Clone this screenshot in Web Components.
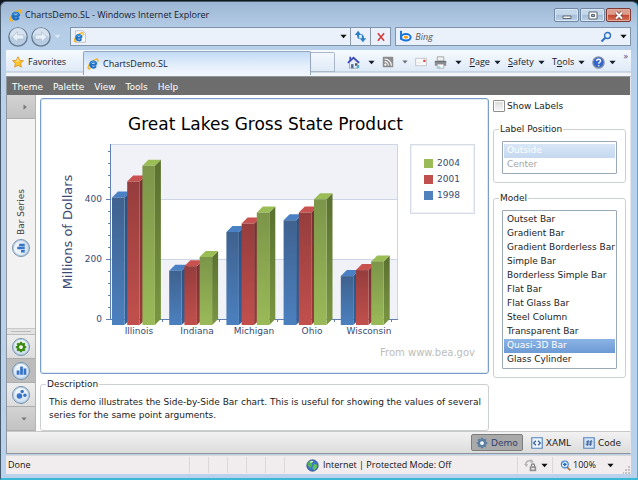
<!DOCTYPE html>
<html lang="en">
<head>
<meta charset="utf-8">
<title>ChartsDemo.SL</title>
<style>
    html, body {
        margin: 0;
        min-height: 100vh;
    }

    body {
        display: flex;
        background: #10181f;
        font-family: "DejaVu Sans", Verdana, sans-serif;
        font-size: 9px;
        line-height: 12px;
        color: #222;
    }
</style>
</head>
<body>
<ie-window>
    <ie-titlebar slot="chrome">ChartsDemo.SL - Windows Internet Explorer</ie-titlebar>
    <ie-address slot="chrome"></ie-address>
    <ie-commands slot="chrome" page-title="ChartsDemo.SL"></ie-commands>

    <demo-menu slot="page"></demo-menu>
    <demo-body slot="page">
        <demo-sidebar slot="side">Bar Series</demo-sidebar>
        <bar-chart slot="main" heading="Great Lakes Gross State Product" axis="Millions of Dollars">From www.bea.gov</bar-chart>
        <group-box slot="main" label="Description" class="description">
            This demo illustrates the Side-by-Side Bar chart. This is useful for showing the values of several series for the same point arguments.
        </group-box>
        <check-option slot="options">Show Labels</check-option>
        <group-box slot="options" label="Label Position">
            <list-box label="Label Position" items="Outside,Center" selected="Outside" disabled></list-box>
        </group-box>
        <group-box slot="options" label="Model">
            <list-box label="Model" selected="Quasi-3D Bar"
                items="Outset Bar,Gradient Bar,Gradient Borderless Bar,Simple Bar,Borderless Simple Bar,Flat Bar,Flat Glass Bar,Steel Column,Transparent Bar,Quasi-3D Bar,Glass Cylinder"></list-box>
        </group-box>
    </demo-body>
    <demo-footer slot="page"></demo-footer>

    <ie-status slot="status">Done</ie-status>
</ie-window>

<script>
const ieLogo = `
    <path d="M14 5.500c1.200-3 .2-4.800-2.400-3.700C7.500 3.200 3 8 1.800 11.500c-1 2.800.6 3.700 3 2.300" fill="none" stroke="#efb32c" stroke-width="2"/>
    <path d="M12.500 9H4.500C4.500 3.500 12 3.500 12.300 8.700M4.600 9c.2 4.500 5.500 4.800 7.300 2" fill="none" stroke="#1d6fc4" stroke-width="2.800"/>
    <path d="M4.800 7C6 4.500 10 4.300 11.500 6.500" fill="none" stroke="#5bb4f2" stroke-width="1.200"/>`;

const icons = {
    ie: ieLogo,
    page: `<path d="M2 1h9l3 3v11H2z" fill="#fff" stroke="#a9b4c0"/><g transform="translate(-1 2) scale(.85)">${ieLogo}</g>`,
    star: `<path d="M8 1l2.200 4.700 5.100.6-3.800 3.500 1 5.100L8 12.400 3.500 14.900l1-5.100L.7 6.300l5.100-.6z" fill="#ffc32e" stroke="#d98a13"/><path d="M8 3l1.500 3.500L5 8z" fill="#ffe899"/>`,
    refresh: `<path d="M5 1L1 6h2.700c0 3 .8 4.500 3.500 5.500-1-2-1-3.500-.8-5.500H9zM11 15l4-5h-2.700c0-3-.8-4.500-3.500-5.500 1 2 1 3.500.8 5.500H7z" fill="#2c7fc8"/>`,
    stop: `<path d="M3 2l10 12M13 2L3 14" fill="none" stroke="#d2393b" stroke-width="2.400"/>`,
    bing: `<path d="M2.500 1v11" stroke="#1874d8" stroke-width="2.400"/><ellipse cx="8.500" cy="9" rx="5.800" ry="4" fill="#fff" stroke="#1874d8" stroke-width="2.500"/><ellipse cx="8.500" cy="9" rx="2.600" ry="1.800" fill="#f59b1c"/>`,
    search: `<circle cx="10" cy="6" r="4" fill="#e6f2fd" stroke="#2e6fc0" stroke-width="1.800"/><path d="M7 9l-5 5" stroke="#2e6fc0" stroke-width="2.600"/>`,
    home: `<path d="M3 8v7h10V8L8 3.500z" fill="#e8eef6" stroke="#7c8aa0" stroke-width=".8"/><path d="M1 8.500L8 2l7 6.500" fill="none" stroke="#3848b8" stroke-width="2"/><path d="M3 1h2v4l-2 2z" fill="#3848b8"/><path d="M5 10h3v5H5z" fill="#4c6a92"/><path d="M10 9h2v3h-2z" fill="#333"/><path d="M12 11h3v4h-3z" fill="#4daccd"/>`,
    rss: `<rect x="1" y="1" width="14" height="14" rx="1" fill="#8c8c8c"/><circle cx="4.500" cy="11.500" r="1.500" fill="#fff"/><path d="M3.500 7.500a5 5 0 015 5M3.500 4a9 9 0 019 9" fill="none" stroke="#fff" stroke-width="1.500"/>`,
    mail: `<rect x="1" y="3" width="14" height="10" fill="#fafafa" stroke="#b5b8bd"/><path d="M11 5h3v3h-3z" fill="#d84a4a"/><path d="M3 9h6" stroke="#d9d9d9"/>`,
    printer: `<path d="M4 1h8v5H4z" fill="#f2f2f2" stroke="#999"/><path d="M1 6h14v6H1z" fill="#8b8f95"/><path d="M1 7h14" stroke="#5f6368"/><path d="M4 10h8v5H4z" fill="#fff" stroke="#888" stroke-width=".7"/><path d="M5 13h3v1H5z" fill="#3aa6cf"/>`,
    help: `<circle cx="8" cy="8" r="7" fill="#3467c9" stroke="#8b97aa" stroke-width="1.500"/><path d="M5.700 6.300c0-3.100 4.800-3 4.800-.3 0 1.700-2.300 1.700-2.300 3.600M8.200 11v1.700" fill="none" stroke="#fff" stroke-width="1.700"/>`,
    globe: `<circle cx="8" cy="8" r="7" fill="#3f74cc" stroke="#2b4c86"/><path d="M2 5c3-4 5-3 7-2L7 6l1 2-3 3-3-3z" fill="#52b453"/><path d="M10 6l4 1-1 4-3 3-2-3z" fill="#63c45c"/><path d="M5 3l3-1 1 1-3 2z" fill="#dff3dc"/>`,
    lock: `<path d="M2 7a5 5 0 018-4" fill="none" stroke="#b5b5b5" stroke-width="2"/><path d="M0 6h5L3 10zM9 0l3 4-4 1z" fill="#b5b5b5"/><path d="M9 9V8a2 2 0 014 0v2" fill="none" stroke="#777" stroke-width="1.300"/><path d="M7 9h8v6H7z" fill="#8f8f8f"/><path d="M9 11h4v2H9z" fill="#eee"/>`,
    zoom: `<path d="M10 10l5 5" stroke="#b77b3c" stroke-width="2.600"/><circle cx="7" cy="6.500" r="5" fill="#dcecfb" stroke="#3c7fd0" stroke-width="1.600"/><path d="M7 4v5M4.500 6.500h5" stroke="#1f5fb5" stroke-width="1.800"/>`,
    gear: `<path d="M8 1v14M1 8h14M3 3l10 10M13 3L3 13" stroke="currentColor" stroke-width="3"/><circle cx="8" cy="8" r="4" fill="#fff" stroke="currentColor" stroke-width="3"/>`,
    bars: `<path d="M1 8h4v6H1zM6 2h4v12H6zM11 5h4v9h-4z" fill="#3774c8"/>`,
    dots: `<circle cx="5" cy="10" r="4" fill="#3774c8"/><circle cx="9" cy="3.500" r="2.500" fill="#3774c8"/><circle cx="13" cy="9" r="2.500" fill="#3774c8"/>`,
    xaml: `<path d="M1 1h14v14H1z" fill="#edf4fc" stroke="#5484bd" stroke-width="1.500"/><path d="M6.500 5l-3 3 3 3M9.500 5l3 3-3 3" fill="none" stroke="#355d93" stroke-width="1.600"/>`,
    code: `<path d="M1 1h14v14H1z" fill="#d5e5f7" stroke="#5484bd" stroke-width="1.500"/><path d="M7 4L5.500 12M11 4L9.500 12M4 6.500h8.500M3.500 9.500H12" fill="none" stroke="#355d93" stroke-width="1.300"/>`,
    down: `<path d="M1 4h14l-7 8z" fill="currentColor"/>`,
    right: `<path d="M4 1l9 7-9 7z" fill="currentColor"/>`
};

const icon = (name, size = 12) =>
    `<svg class="icon" width="${size}" height="${size}" viewBox="0 0 16 16" aria-hidden="true">${icons[name]}</svg>`;

const baseStyle = `
    :host { display: block; box-sizing: border-box; }
    * { box-sizing: border-box; }
    svg { display: block; flex: none; }
    button {
        display: flex;
        align-items: center;
        gap: 4px;
        margin: 0;
        padding: 0;
        border: 0;
        background: none;
        font: inherit;
        color: inherit;
    }
`;

// attach an open shadow root and fill it
class BaseElement extends HTMLElement {
    connectedCallback() {
        if (this.shadowRoot) return;
        const template = document.createElement('template');
        template.innerHTML = `<style>${baseStyle}</style>` + this.render();
        this.attachShadow({ mode: 'open' });
        this.shadowRoot.appendChild(template.content.cloneNode(true));
    }
}

class IeWindow extends BaseElement {
    render() {
        return `
            <style>
                :host {
                    flex: 1;
                    display: flex;
                    flex-direction: column;
                    margin-top: 1px;
                    padding: 0 6px 4px 5px;
                    border: 1px solid #46596b;
                    border-right-color: #3bb8d6;
                    border-bottom: 2px solid #3bb8d6;
                    border-radius: 6px 6px 0 0;
                    background: linear-gradient(#9db6d3, #b4cce6 26px, #b9d1ea 60px);
                }
                .page {
                    flex: 1;
                    display: flex;
                    flex-direction: column;
                    border: 1px solid #8f959c;
                    border-right-color: #e3e6ea;
                    background: #fff;
                }
            </style>
            <slot name="chrome"></slot>
            <div class="page"><slot name="page"></slot></div>
            <slot name="status"></slot>
        `;
    }
}

class IeTitlebar extends BaseElement {
    render() {
        return `
            <style>
                :host {
                    display: flex;
                    align-items: center;
                    gap: 3px;
                    height: 24px;
                    padding: 2px 0 0 3px;
                    font-family: "Open Sans", sans-serif;
                    color: #14202e;
                }
                .title { flex: 1; }
                .buttons { display: flex; gap: 1px; }
                button {
                    justify-content: center;
                    width: 25px;
                    height: 14px;
                    border: 1px solid #6f87a3;
                    border-radius: 2px;
                    background: linear-gradient(#c5d7ea 45%, #a4bcd6 50%, #bed3e9);
                    box-shadow: inset 0 0 0 1px #d9e6f3;
                }
                .close {
                    border-color: #7c3a35;
                    background: linear-gradient(#dd9c8d 45%, #c1442d 50%, #d6765d);
                    box-shadow: inset 0 0 0 1px #e3aa9e;
                }
            </style>
            ${icon('ie', 13)}
            <span class="title"><slot></slot></span>
            <div class="buttons">
                <button aria-label="Minimize"><svg width="10" height="9" viewBox="0 0 10 9"><path d="M1 5h8v2.500H1z" fill="#fff" stroke="#5b6470"/></svg></button>
                <button aria-label="Maximize"><svg width="10" height="9" viewBox="0 0 10 9"><path d="M1 1h8v7H1z" fill="#fff" stroke="#5b6470"/><path d="M3.500 3.500h3v2h-3z" fill="#9db3ca" stroke="#5b6470"/></svg></button>
                <button class="close" aria-label="Close"><svg width="10" height="9" viewBox="0 0 10 9"><path d="M2 1.500l6 6M8 1.500l-6 6" stroke="#6b3a3a" stroke-width="3.400"/><path d="M2 1.500l6 6M8 1.500l-6 6" stroke="#fff" stroke-width="2"/></svg></button>
            </div>
        `;
    }
}

class IeAddress extends BaseElement {
    render() {
        const arrow = d => `
            <svg width="20" height="20" viewBox="0 0 19 19">
                <circle cx="9.500" cy="9.500" r="8.700" fill="#b9cde2" stroke="#64788f" stroke-width="1.200"/>
                <path d="M1.500 9a8 8 0 0116 0z" fill="#d5e1ee"/>
                <path d="${d}" fill="#e7eff7" stroke="#a4b8cd" stroke-width=".6"/>
            </svg>`;
        return `
            <style>
                :host {
                    display: grid;
                    grid-template-columns: 58px 15fr 11fr;
                    gap: 4px;
                    align-items: center;
                    height: 24px;
                    padding: 0 0 3px 2px;
                    font-family: "Open Sans", sans-serif;
                }
                .nav { display: flex; align-items: center; gap: 3px; color: #dbe7f3; }
                .field {
                    display: flex;
                    align-items: center;
                    height: 19px;
                    border: 1px solid #7f93aa;
                    background: #eaf1fa;
                    color: #111;
                }
                .field > button {
                    justify-content: center;
                    align-self: stretch;
                    width: 20px;
                }
                .field > .drop { width: 14px; }
                .field > .framed { border-left: 1px solid #8b99a9; }
                .field > .icon { margin: 0 3px; }
                input {
                    flex: 1;
                    min-width: 0;
                    padding: 0;
                    border: 0;
                    outline: 0;
                    background: none;
                    font: inherit;
                }
                input::placeholder { color: #555; font-style: italic; opacity: 1; }
            </style>
            <div class="nav">
                <button aria-label="Back">${arrow('M4 9.500l5-5v3h6v4H9v3z')}</button>
                <button aria-label="Forward">${arrow('M15 9.500l-5-5v3H4v4h6v3z')}</button>
                <button aria-label="Recent pages">${icon('down', 7)}</button>
            </div>
            <div class="field">
                ${icon('page', 13)}
                <input type="text" aria-label="Address">
                <button class="drop" aria-label="Show addresses">${icon('down', 7)}</button>
                <button class="framed" aria-label="Refresh">${icon('refresh', 13)}</button>
                <button class="framed" aria-label="Stop">${icon('stop', 10)}</button>
            </div>
            <div class="field">
                ${icon('bing', 13)}
                <input type="search" aria-label="Search" placeholder="Bing">
                <button aria-label="Search">${icon('search', 12)}</button>
                <button class="drop" aria-label="Search options">${icon('down', 7)}</button>
            </div>
        `;
    }
}

class IeCommands extends BaseElement {
    render() {
        return `
            <style>
                :host {
                    display: flex;
                    height: 26px;
                    padding-bottom: 1px;
                    background: linear-gradient(#f6fafe, #dfeaf7 21px, #aebdce 22px, #f2f6fb 23px);
                    font-family: "Open Sans", sans-serif;
                    color: #14202e;
                }
                .favorites {
                    width: 77px;
                    height: 23px;
                    padding-left: 6px;
                    padding-top: 1px;
                }
                .tab {
                    flex: 1;
                    display: flex;
                    align-items: center;
                    gap: 4px;
                    height: 24px;
                    margin-top: 1px;
                    padding-left: 3px;
                    border: 1px solid #93a5ba;
                    border-bottom: 0;
                    border-radius: 2px 2px 0 0;
                    background: linear-gradient(#c3dbf6, #e4effb 60%, #f2f6fb);
                    color: inherit;
                    text-decoration: none;
                }
                .new {
                    width: 24px;
                    height: 20px;
                    margin-top: 2px;
                    border: 1px solid #a9b7c8;
                    border-left: 0;
                    border-radius: 0 2px 0 0;
                }
                .tools {
                    display: flex;
                    align-items: center;
                    justify-content: space-between;
                    width: 296px;
                    height: 23px;
                    padding: 1px 3px 0 12px;
                }
                .tools button { gap: 4px; }
                .tools .wide { gap: 8px; }
                .tools .more { align-self: flex-start; line-height: 10px; color: #44538f; }
                .dim { color: #6c6f73; }
            </style>
            <button class="favorites">${icon('star', 12)}Favorites</button>
            <a class="tab" href="#">${icon('ie', 12)}${this.getAttribute('page-title')}</a>
            <button class="new" aria-label="New tab"></button>
            <div class="tools">
                <button class="wide" aria-label="Home">${icon('home', 13)}${icon('down', 7)}</button>
                <button class="wide dim" aria-label="Feeds">${icon('rss', 12)}${icon('down', 6)}</button>
                <button aria-label="Read mail">${icon('mail', 12)}</button>
                <button class="wide" aria-label="Print">${icon('printer', 13)}${icon('down', 7)}</button>
                <button><span><u>P</u>age</span>${icon('down', 7)}</button>
                <button><span><u>S</u>afety</span>${icon('down', 7)}</button>
                <button><span>T<u>o</u>ols</span>${icon('down', 7)}</button>
                <button aria-label="Help">${icon('help', 13)}${icon('down', 7)}</button>
                <button class="more" aria-label="More">»</button>
            </div>
        `;
    }
}

class DemoMenu extends BaseElement {
    render() {
        const items = ['Theme', 'Palette', 'View', 'Tools', 'Help'];
        return `
            <style>
                nav {
                    display: flex;
                    align-items: center;
                    gap: 10px;
                    height: 18px;
                    padding: 1px 5px 0;
                    background: #6d6d6d;
                    color: #fff;
                }
            </style>
            <nav>${items.map(item => `<button>${item}</button>`).join('')}</nav>
        `;
    }
}

class DemoBody extends BaseElement {
    render() {
        return `
            <style>
                :host {
                    flex: 1;
                    display: grid;
                    grid-template-columns: 29px 1fr 133px;
                    gap: 4px;
                    padding-right: 4px;
                }
                .main, .options { display: flex; flex-direction: column; padding-top: 3px; }
                .main { gap: 4px; }
                .options { gap: 9px; }
                .main ::slotted(bar-chart) { flex: 1; }
                .side { display: grid; }
            </style>
            <div class="side"><slot name="side"></slot></div>
            <div class="main"><slot name="main"></slot></div>
            <div class="options"><slot name="options"></slot></div>
        `;
    }
}

class DemoSidebar extends BaseElement {
    render() {
        return `
            <style>
                :host {
                    display: flex;
                    flex-direction: column;
                    border-right: 1px solid #b5b5b5;
                    background: #f2f2f2;
                    color: #444;
                }
                button {
                    justify-content: center;
                    height: 24px;
                    border-bottom: 1px solid #adadad;
                    background: linear-gradient(#ededed, #dcdcdc);
                }
                .expand, .overflow { background: linear-gradient(#d3d3d3, #c2c2c2); color: #777; }
                .expand { padding-left: 8px; }
                .overflow { padding-left: 5px; }
                .active { background: #bcbcbc; }
                .group {
                    flex: 1;
                    display: flex;
                    align-items: center;
                    gap: 4px;
                    writing-mode: vertical-rl;
                    transform: rotate(180deg);
                }
                .splitter {
                    height: 7px;
                    padding: 2px 4px;
                    border-top: 1px solid #c9c9c9;
                    border-bottom: 1px solid #bdbdbd;
                    background: #e3e3e3;
                }
                .splitter::before {
                    content: "";
                    display: block;
                    height: 1px;
                    background: #bbb;
                }
                .round {
                    display: grid;
                    place-items: center;
                    width: 18px;
                    height: 18px;
                    border: 1px solid #7691ad;
                    border-radius: 50%;
                    background: linear-gradient(#f8fbfe, #cfe0f0);
                    box-shadow: inset 0 0 0 1px #b9cfe4;
                    color: #3a8a10;
                }
                .group .round {
                    margin-top: 71px;
                    transform: rotate(90deg);
                }
            </style>
            <button class="expand" aria-label="Expand">${icon('right', 6)}</button>
            <div class="group"><span class="round">${icon('bars', 10)}</span><span><slot></slot></span></div>
            <div class="splitter"></div>
            <button aria-label="Settings"><span class="round">${icon('gear', 12)}</span></button>
            <button class="active" aria-label="Bar series"><span class="round">${icon('bars', 11)}</span></button>
            <button aria-label="Point series"><span class="round">${icon('dots', 11)}</span></button>
            <button class="overflow" aria-label="More groups">${icon('down', 6)}</button>
        `;
    }
}

const series = [
    { year: 1998, color: 'blue', values: [425, 181, 310, 349, 163] },
    { year: 2001, color: 'red', values: [478, 196, 338, 375, 183] },
    { year: 2004, color: 'green', values: [531, 227, 375, 419, 212] }
];
const states = ['Illinois', 'Indiana', 'Michigan', 'Ohio', 'Wisconsin'];
const shades = {
    blue: { dark: '#3f628f', light: '#4b80bf', side: '#2b5282', sideLight: '#31619b', top: '#4a80c4', key: '#4f81bd' },
    red: { dark: '#953d3d', light: '#c1504d', side: '#743031', sideLight: '#9a3b3b', top: '#c9514f', key: '#c0504d' },
    green: { dark: '#7c9549', light: '#9aba58', side: '#5a7030', sideLight: '#7a9641', top: '#9bbd56', key: '#9bbb59' }
};

class BarChart extends BaseElement {
    // value to vertical position, 200 units are 60px
    y(value) {
        return 179 - value * 0.3;
    }

    bar(group, index, value, color) {
        const depth = 6;
        const width = 12.5;
        const x = 56 + group * 57.2 + index * 15.2;
        const top = this.y(value) + depth;
        const bottom = this.y(0) + depth;
        const right = x + width;
        return `
            <path d="M${right} ${top}l${depth} -${depth}V${bottom - depth}l-${depth} ${depth}z" fill="url(#${color}-side)"/>
            <path d="M${x} ${top}l${depth} -${depth}h${width}l-${depth} ${depth}z" fill="${shades[color].top}"/>
            <path d="M${x} ${top}h${width}V${bottom}H${x}z" fill="url(#${color}-front)"/>`;
    }

    plot() {
        let out = '<defs>';
        for (const [name, c] of Object.entries(shades)) {
            out += `<linearGradient id="${name}-front" x2="0" y2="1"><stop stop-color="${c.dark}"/><stop offset="1" stop-color="${c.light}"/></linearGradient>
                <linearGradient id="${name}-side" x2="0" y2="1"><stop stop-color="${c.side}"/><stop offset="1" stop-color="${c.sideLight}"/></linearGradient>`;
        }
        out += '</defs>';
        // bands and grid
        out += '<path d="M54 5h288v54H54zM54 119h288v60H54z" fill="#f1f2f7"/>';
        out += '<path d="M54 4.500h287.500V179M54 59.500h288M54 119.500h288" fill="none" stroke="#ccd6e4"/>';
        // axes
        let ticks = '';
        for (let v = 0; v <= 560; v += 40) {
            ticks += `M${v % 200 ? 52 : 50} ${this.y(v) + 0.5}H55`;
        }
        for (let i = 1; i < 6; i++) {
            ticks += `M${Math.round(49 + i * 57.2) + 0.5} 179v3`;
        }
        out += `<path d="M54.500 4V179.500H342${ticks}" fill="none" stroke="#5f80b0"/>`;
        for (const v of [0, 200, 400]) {
            out += `<text x="46" y="${this.y(v) + 3}" text-anchor="end">${v}</text>`;
        }
        states.forEach((state, group) => {
            series.forEach((s, index) => {
                out += this.bar(group, index, s.values[group], s.color);
            });
            out += `<text x="${Math.round(83 + group * 57.5)}" y="194" text-anchor="middle">${state}</text>`;
        });
        out += `<text class="axis" text-anchor="middle" transform="translate(16 92) rotate(-90)">${this.getAttribute('axis')}</text>`;
        return out;
    }

    render() {
        const keys = [...series].reverse();
        return `
            <style>
                :host {
                    display: flex;
                    flex-direction: column;
                    padding: 13px 13px 10px 15px;
                    border: 1px solid #7c9cc9;
                    border-radius: 3px;
                    box-shadow: inset 0 0 0 1px #dfe8f3;
                    color: #3a4a72;
                }
                h1 {
                    margin: 0;
                    font: 17px/24px "DejaVu Sans", Verdana, sans-serif;
                    text-align: center;
                    color: #000;
                }
                .body { display: flex; align-items: flex-start; justify-content: space-between; margin-top: 4px; }
                .body svg { width: 344px; height: 200px; }
                text { font-size: 9px; fill: #3a4a72; }
                text.axis { font-size: 13px; }
                ul {
                    display: grid;
                    gap: 4px;
                    width: 65px;
                    margin: 4px 0 0;
                    padding: 12px 13px;
                    border: 1px solid #d5dce8;
                    list-style: none;
                    box-shadow: inset 0 0 0 1px #eef1f6;
                }
                li { display: flex; align-items: center; gap: 4px; }
                li::before { content: ""; width: 9px; height: 9px; background: var(--key); }
                .credit { margin-top: 7px; text-align: right; font-size: 10px; color: #bcbcbc; }
            </style>
            <h1>${this.getAttribute('heading')}</h1>
            <div class="body">
                <svg viewBox="0 0 344 200">${this.plot()}</svg>
                <ul>${keys.map(s => `<li style="--key: ${shades[s.color].key}">${s.year}</li>`).join('')}</ul>
            </div>
            <div class="credit"><slot></slot></div>
        `;
    }
}

class GroupBox extends BaseElement {
    render() {
        return `
            <style>
                fieldset {
                    min-width: 0;
                    margin: 0;
                    padding: 6px 8px 8px;
                    border: 1px solid #cdd0d3;
                    border-radius: 3px;
                }
                :host(.description) fieldset { padding-right: 2px; line-height: 13px; }
                legend { margin-left: -3px; padding: 0 1px; line-height: 12px; }
            </style>
            <fieldset>
                <legend>${this.getAttribute('label')}</legend>
                <slot></slot>
            </fieldset>
        `;
    }
}

class CheckOption extends BaseElement {
    render() {
        return `
            <style>
                label { display: flex; align-items: center; gap: 2px; height: 16px; }
                input {
                    appearance: none;
                    width: 12px;
                    height: 12px;
                    margin: 0;
                    border: 1px solid #8e8e8e;
                    border-radius: 1px;
                    background: linear-gradient(#d9d9d9, #f7f7f7);
                    box-shadow: inset 0 0 0 1px #fff;
                }
            </style>
            <label><input type="checkbox"><slot></slot></label>
        `;
    }
}

class ListBox extends BaseElement {
    render() {
        const items = this.getAttribute('items').split(',');
        const selected = this.getAttribute('selected');
        const disabled = this.hasAttribute('disabled') ? 'disabled' : '';
        return `
            <style>
                select {
                    display: block;
                    width: 100%;
                    height: auto;
                    padding: 2px 0 1px;
                    border: 1px solid #9aa9b7;
                    border-radius: 1px;
                    outline: 0;
                    background: #fff;
                    font: inherit;
                    overflow: hidden;
                    opacity: 1;
                }
                option {
                    height: 14px;
                    min-height: 14px;
                    margin: 0 1px;
                    padding: 1px 3px 0;
                    line-height: 13px;
                    color: #222;
                }
                option:checked { background: linear-gradient(#8cb4e6, #6c9ad4); color: #fff; }
                select:disabled option { color: #a5a5a5; }
                select:disabled option:checked { background: linear-gradient(#d8e6f7, #c5d8f0); color: #fff; }
            </style>
            <select size="${items.length}" aria-label="${this.getAttribute('label')}" ${disabled}>
                ${items.map(item => `<option ${item === selected ? 'selected' : ''}>${item}</option>`).join('')}
            </select>
        `;
    }
}

class DemoFooter extends BaseElement {
    render() {
        return `
            <style>
                :host {
                    display: flex;
                    align-items: center;
                    justify-content: flex-end;
                    gap: 4px;
                    height: 22px;
                    padding-right: 5px;
                    border-top: 1px solid #c8c8c8;
                    background: linear-gradient(#f2f2f2, #dcdcdc);
                }
                button { height: 17px; padding: 0 4px; gap: 3px; }
                .active {
                    border: 1px solid #7d7d7d;
                    border-radius: 2px;
                    background: #a9a9a9;
                    color: #2c4370;
                }
                .active .icon { color: #5b7fa3; }
            </style>
            <button class="active">${icon('gear', 12)}Demo</button>
            <button>${icon('xaml', 12)}XAML</button>
            <button>${icon('code', 12)}Code</button>
        `;
    }
}

class IeStatus extends BaseElement {
    render() {
        return `
            <style>
                :host {
                    display: flex;
                    align-items: center;
                    height: 19px;
                    margin-top: 1px;
                    padding-left: 2px;
                    border-top: 1px solid #d9d9d9;
                    background: #f1edee;
                    font-family: "Open Sans", sans-serif;
                    color: #111;
                }
                .done { flex: 1; }
                .cell {
                    display: flex;
                    align-items: center;
                    gap: 4px;
                    width: 19px;
                    height: 16px;
                    border-left: 1px solid #dcd7d9;
                }
                .zone { width: 233px; padding-left: 21px; }
                .mode { width: 35px; padding-left: 6px; }
                .level { width: 71px; padding-left: 7px; gap: 2px; }
                .level button:last-child { margin-left: 9px; }
                .grip { align-self: flex-end; }
            </style>
            <span class="done"><slot></slot></span>
            <span class="cell"></span>
            <span class="cell"></span>
            <span class="cell"></span>
            <span class="cell"></span>
            <span class="cell"></span>
            <span class="cell zone">${icon('globe', 13)}Internet | Protected Mode: Off</span>
            <button class="cell mode" aria-label="InPrivate filtering">${icon('lock', 13)}${icon('down', 7)}</button>
            <span class="cell level">
                ${icon('zoom', 11)}100%
                <button aria-label="Zoom level">${icon('down', 7)}</button>
            </span>
            <svg class="grip" width="8" height="8" viewBox="0 0 8 8"><path d="M5 0h2v2H5zM2 3h2v2H2zM5 3h2v2H5zM0 6h1v2H0zM2 6h2v2H2zM5 6h2v2H5z" fill="#c4c0c2"/></svg>
        `;
    }
}

window.customElements.define('ie-window', IeWindow);
window.customElements.define('ie-titlebar', IeTitlebar);
window.customElements.define('ie-address', IeAddress);
window.customElements.define('ie-commands', IeCommands);
window.customElements.define('demo-menu', DemoMenu);
window.customElements.define('demo-body', DemoBody);
window.customElements.define('demo-sidebar', DemoSidebar);
window.customElements.define('bar-chart', BarChart);
window.customElements.define('group-box', GroupBox);
window.customElements.define('check-option', CheckOption);
window.customElements.define('list-box', ListBox);
window.customElements.define('demo-footer', DemoFooter);
window.customElements.define('ie-status', IeStatus);
</script>
</body>
</html>
